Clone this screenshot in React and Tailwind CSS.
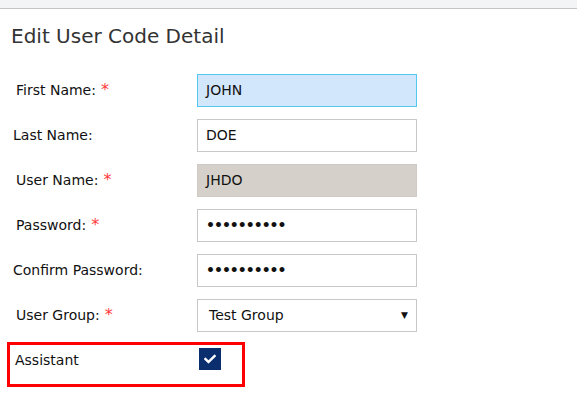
import { FaCheck } from "react-icons/fa";

const rows = [
  { label: "First Name:", req: true, pl: "pl-[16px]", value: "JOHN", kind: "focus" },
  { label: "Last Name:", req: false, pl: "pl-[13px]", value: "DOE", kind: "text" },
  { label: "User Name:", req: true, pl: "pl-[16px]", value: "JHDO", kind: "disabled" },
  { label: "Password:", req: true, pl: "pl-[16px]", value: "••••••••••", kind: "password" },
  { label: "Confirm Password:", req: false, pl: "pl-[13px]", value: "••••••••••", kind: "password" },
];

function Req() {
  return <span className="text-[#ff3b3b] text-[16px] leading-[14px]"> *</span>;
}

function Field({ kind, value }) {
  const base = "w-[220px] h-[33px] border flex items-center px-[8px] text-[14px] text-[#111]";
  if (kind === "focus") {
    return <div className={`${base} border-[#52c7ef] bg-[#d2e6fc]`}>{value}</div>;
  }
  if (kind === "disabled") {
    return <div className={`${base} border-[#cfcac3] bg-[#d5d0ca]`}>{value}</div>;
  }
  if (kind === "password") {
    return (
      <div className={`${base} border-[#c8c8c8] bg-white text-[12px] tracking-[-1px] font-bold`}>
        {value}
      </div>
    );
  }
  return <div className={`${base} border-[#c8c8c8] bg-white`}>{value}</div>;
}

export default function App() {
  return (
    <div className="w-[577px] h-[417px] bg-white overflow-hidden font-['DejaVu_Sans',Verdana,sans-serif]">
      <div className="h-[9px] bg-[#f3f4f6] border-b border-[#c4c4c4]" />

      <h1 className="pl-[11px] pt-[15px] text-[20px] leading-[24px] text-[#333]">
        Edit User Code Detail
      </h1>

      <div className="mt-[26px] flex flex-col gap-[12px]">
        {rows.map((r) => (
          <div key={r.label} className="flex items-center">
            <div className={`w-[197px] text-[14px] text-[#111] ${r.pl}`}>
              {r.label}
              {r.req && <Req />}
            </div>
            <Field kind={r.kind} value={r.value} />
          </div>
        ))}

        <div className="flex items-center">
          <div className="w-[197px] pl-[16px] text-[14px] text-[#111]">
            User Group:
            <Req />
          </div>
          <div className="w-[220px] h-[33px] border border-[#c8c8c8] flex items-center justify-between pl-[11px] pr-[8px] text-[14px] text-[#111]">
            <span>Test Group</span>
            <span className="text-[9px]">▼</span>
          </div>
        </div>
      </div>

      <div className="ml-[7px] mt-[10px] w-[238px] h-[45px] border-[3px] border-[#ff0000] flex items-start">
        <div className="w-[189px] pl-[5px] pt-[5px] text-[14px] text-[#111]">Assistant</div>
        <div className="mt-[3px] w-[22px] h-[22px] bg-[#0b2f6e] flex items-center justify-center">
          <FaCheck size={12} className="text-white" />
        </div>
      </div>
    </div>
  );
}
